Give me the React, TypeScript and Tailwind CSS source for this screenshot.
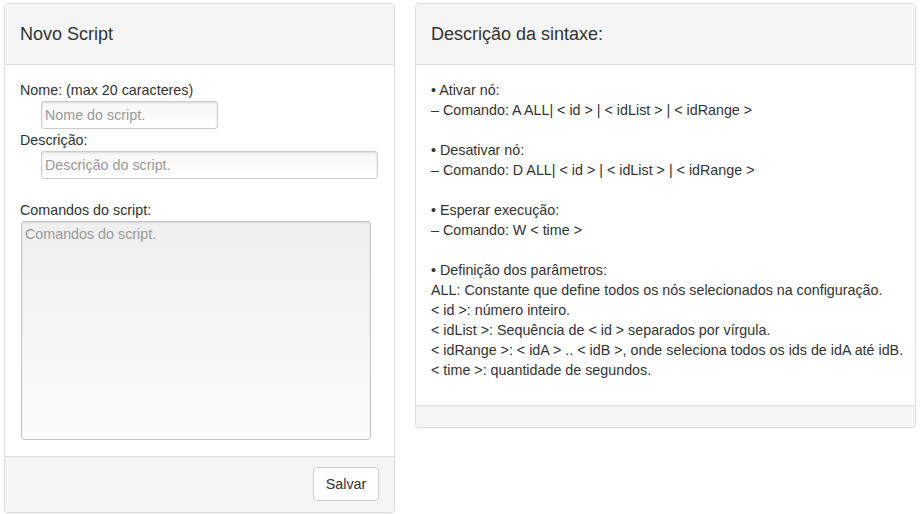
import React from "react";

const lines: (string | null)[] = [
  "• Ativar nó:",
  "– Comando: A ALL| < id > | < idList > | < idRange >",
  null,
  "• Desativar nó:",
  "– Comando: D ALL| < id > | < idList > | < idRange >",
  null,
  "• Esperar execução:",
  "– Comando: W < time >",
  null,
  "• Definição dos parâmetros:",
  "ALL: Constante que define todos os nós selecionados na configuração.",
  "< id >: número inteiro.",
  "< idList >: Sequência de < id > separados por vírgula.",
  "< idRange >: < idA > .. < idB >, onde seleciona todos os ids de idA até idB.",
  "< time >: quantidade de segundos.",
];

export default function App() {
  return (
    <div className="w-[921px] h-[514px] bg-white pl-[4px] pt-[3px] flex gap-[20px] items-start text-[14.3px] leading-[20px] text-[#333] font-['Liberation_Sans',Arial,sans-serif]">
      {/* Left panel */}
      <div className="w-[391px] h-[510px] border border-[#dddddd] rounded-[4px] shadow-[0_1px_1px_rgba(0,0,0,0.05)] flex flex-col overflow-hidden">
        <div className="h-[61px] bg-[#f5f5f5] border-b border-[#dddddd] flex items-center px-[15px] text-[18px]">
          Novo Script
        </div>
        <div className="flex-1 bg-white px-[15px] pt-[15px] flex flex-col">
          <div>Nome: (max 20 caracteres)</div>
          <div className="ml-[21px] mt-[1px] w-[177px] h-[28px] border border-[#cccccc] rounded-[3px] bg-[linear-gradient(#f7f7f7,#ffffff)] shadow-[inset_0_1px_2px_rgba(0,0,0,0.12)] px-[3px] flex items-center text-[#999]">
            Nome do script.
          </div>
          <div className="mt-[1px]">Descrição:</div>
          <div className="ml-[21px] mt-[1px] w-[337px] h-[28px] border border-[#cccccc] rounded-[3px] bg-[linear-gradient(#f7f7f7,#ffffff)] shadow-[inset_0_1px_2px_rgba(0,0,0,0.12)] px-[3px] flex items-center text-[#999]">
            Descrição do script.
          </div>
          <div className="mt-[21px]">Comandos do script:</div>
          <div className="ml-[1px] mt-[1px] w-[350px] h-[219px] border border-[#c4c4c4] rounded-[3px] bg-[linear-gradient(#efefef,#fcfcfc)] shadow-[inset_0_1px_2px_rgba(0,0,0,0.1)] px-[3px] pt-[2px] text-[#999]">
            Comandos do script.
          </div>
        </div>
        <div className="h-[56px] bg-[#f5f5f5] border-t border-[#dddddd] flex items-start justify-end pt-[10px] pr-[15px]">
          <button className="h-[34px] w-[66px] bg-white border border-[#cccccc] rounded-[4px] text-[#333] text-[14.3px]">
            Salvar
          </button>
        </div>
      </div>

      {/* Right panel */}
      <div className="w-[501px] border border-[#dddddd] rounded-[4px] shadow-[0_1px_1px_rgba(0,0,0,0.05)] flex flex-col overflow-hidden">
        <div className="h-[61px] bg-[#f5f5f5] border-b border-[#dddddd] flex items-center px-[15px] text-[18px]">
          Descrição da sintaxe:
        </div>
        <div className="bg-white px-[15px] pt-[15px] pb-[25px]">
          {lines.map((l, i) => (
            <div key={i} className="h-[20px] whitespace-pre">
              {l ?? ""}
            </div>
          ))}
        </div>
        <div className="h-[22px] bg-[#f5f5f5] border-t border-[#dddddd]" />
      </div>
    </div>
  );
}
